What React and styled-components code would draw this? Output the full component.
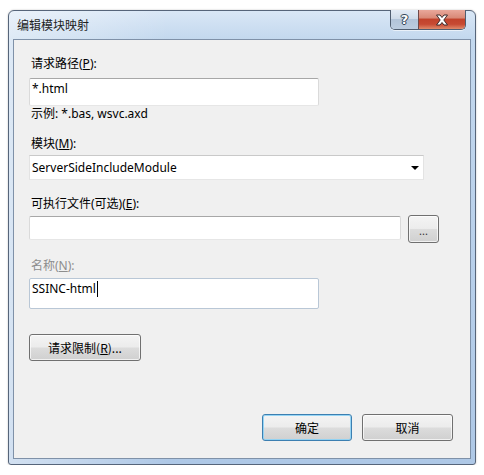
import React from "react";
import styled, { createGlobalStyle } from "styled-components";

const Global = createGlobalStyle`
  html, body { margin: 0; background: #fff; }
  body { font-family: "Noto Sans", "Noto Sans CJK SC", sans-serif; font-size: 12px; color: #000; }
`;

const Page = styled.div`
  padding: 10px 0 0 8px;
`;

const Win = styled.div`
  box-sizing: border-box;
  width: 468px;
  height: 455px;
  border: 1px solid #56657a;
  border-radius: 6px 6px 3px 3px;
  background:
    linear-gradient(to right, rgba(255,255,255,0.45) 0, rgba(255,255,255,0) 160px),
    linear-gradient(to bottom, #d9e7f6 0, #c3d8ee 28px, #b7cfea 60%, #aec8e6 100%);
  padding: 0 4px 5px 4px;
  display: flex;
  flex-direction: column;
  box-shadow: 0 0 2px rgba(0,0,0,0.25);
`;

const TitleBar = styled.div`
  height: 28px;
  display: flex;
  align-items: flex-start;
`;

const Title = styled.div`
  font-family: "Noto Sans CJK SC", sans-serif;
  font-size: 12px;
  line-height: 28px;
  padding-left: 4px;
  color: #1e1e1e;
  flex: 1;
`;

const Caption = styled.div`
  display: flex;
  margin-top: -1px;
  margin-right: 5px;
  border: 1px solid #4f5d70;
  border-top: none;
  border-radius: 0 0 5px 5px;
  overflow: hidden;
  box-shadow: 0 1px 0 rgba(255,255,255,0.6);
`;

const CapBtn = styled.div`
  width: ${(p) => p.w}px;
  height: 19px;
  display: flex;
  align-items: center;
  justify-content: center;
  background: ${(p) =>
    p.close
      ? "linear-gradient(to bottom, #e9a89b 0, #d98a78 40%, #c2432c 50%, #c74a33 75%, #e08a6b 100%)"
      : "linear-gradient(to bottom, #e3ebf5 0, #cfdbe9 45%, #b2c4d9 50%, #bccde0 100%)"};
  border-left: ${(p) => (p.close ? "1px solid #6e4a4a" : "none")};
`;

const HelpGlyph = styled.span`
  font-family: "DejaVu Sans", sans-serif;
  font-weight: bold;
  font-size: 13px;
  line-height: 1;
  color: #fff;
  text-shadow: 0 0 1px #2d3c50, 0 0 1px #2d3c50, 1px 0 0 #3b4b60, -1px 0 0 #3b4b60, 0 1px 0 #3b4b60, 0 -1px 0 #3b4b60;
`;

const Client = styled.div`
  flex: 1;
  border: 1px solid #7f91a8;
  background: #f0f0f0;
  padding: 16px 0 17px 15px;
  display: flex;
  flex-direction: column;
`;

const Label = styled.div`
  font-family: "Noto Sans", "Noto Sans CJK SC", sans-serif;
  line-height: 16px;
  height: 16px;
  padding-left: 2px;
  margin-top: ${(p) => p.mt || 0}px;
  color: ${(p) => (p.disabled ? "#8d8d8d" : "#000")};
  white-space: nowrap;
`;

const TextBox = styled.div`
  box-sizing: border-box;
  width: ${(p) => p.w}px;
  height: ${(p) => p.h}px;
  margin-top: ${(p) => p.mt || 0}px;
  background: #fff;
  border: 1px solid;
  border-color: ${(p) => (p.soft ? "#b9c7d6" : "#a7a7a7 #dadada #e6e6e6 #dadada")};
  border-radius: 2px;
  padding: 2px 0 0 2px;
  line-height: 16px;
  display: flex;
  align-items: flex-start;
  white-space: nowrap;
`;

const Caret = styled.span`
  display: inline-block;
  width: 1px;
  height: 16px;
  background: #000;
  margin-left: 1px;
`;

const Select = styled.div`
  box-sizing: border-box;
  width: 395px;
  height: 25px;
  margin-top: 3px;
  background: #fff;
  border: 1px solid;
  border-color: #c9c9c9 #e3e3e3 #e6e6e6 #e3e3e3;
  display: flex;
  align-items: center;
  padding: 0 0 1px 2px;
  justify-content: space-between;
`;

const Arrow = styled.span`
  width: 0;
  height: 0;
  border-left: 4px solid transparent;
  border-right: 4px solid transparent;
  border-top: 4px solid #000;
  margin-right: 4px;
  margin-top: 1px;
`;

const Row = styled.div`
  display: flex;
  align-items: flex-start;
  gap: 7px;
  margin-top: ${(p) => p.mt || 0}px;
`;

const Button = styled.button`
  box-sizing: border-box;
  width: ${(p) => p.w}px;
  height: ${(p) => p.h || 27}px;
  margin-top: ${(p) => p.mt || 0}px;
  padding: 0;
  font-family: "Noto Sans CJK SC", "Noto Sans", sans-serif;
  font-size: 12px;
  color: #000;
  border: 1px solid ${(p) => (p.focus ? "#3c7fb1" : "#707070")};
  border-radius: 3px;
  background: linear-gradient(to bottom, #f4f4f4 0, #ececec 48%, #dcdcdc 52%, #d0d0d0 100%);
  box-shadow: inset 0 0 0 1px ${(p) => (p.focus ? "rgba(140,210,245,0.9)" : "rgba(255,255,255,0.7)")};
  display: flex;
  align-items: center;
  justify-content: center;
  cursor: default;
`;

const Dots = styled.span`
  font-family: "Noto Sans", sans-serif;
  font-size: 11px;
  letter-spacing: 0;
  margin-top: 3px;
  color: #333;
`;

const Footer = styled.div`
  margin-top: auto;
  display: flex;
  justify-content: flex-end;
  gap: 10px;
  padding-right: 17px;
`;

export default function App() {
  return (
    <>
      <Global />
      <Page>
        <Win>
          <TitleBar>
            <Title>编辑模块映射</Title>
            <Caption>
              <CapBtn w={27}>
                <HelpGlyph>?</HelpGlyph>
              </CapBtn>
              <CapBtn w={46} close>
                <svg width="14" height="12" viewBox="0 0 14 12">
                  <path
                    d="M1.5 1 L5 1 L7 3.5 L9 1 L12.5 1 L8.8 6 L12.5 11 L9 11 L7 8.5 L5 11 L1.5 11 L5.2 6 Z"
                    fill="#fff"
                    stroke="#3d2a2a"
                    strokeWidth="1"
                    strokeLinejoin="round"
                  />
                </svg>
              </CapBtn>
            </Caption>
          </TitleBar>
          <Client>
            <Label>
              请求路径(<u>P</u>):
            </Label>
            <TextBox w={290} h={28} mt={6}>
              *.html
            </TextBox>
            <Label>示例: *.bas, wsvc.axd</Label>
            <Label mt={14}>
              模块(<u>M</u>):
            </Label>
            <Select>
              <span>ServerSideIncludeModule</span>
              <Arrow />
            </Select>
            <Label mt={16}>
              可执行文件(可选)(<u>E</u>):
            </Label>
            <Row mt={3}>
              <TextBox w={372} h={24} mt={1} />
              <Button w={31} h={28}>
                <Dots>...</Dots>
              </Button>
            </Row>
            <Label mt={15} disabled>
              名称(<u>N</u>):
            </Label>
            <TextBox w={290} h={31} mt={4} soft>
              SSINC-html
              <Caret />
            </TextBox>
            <Button w={112} h={27} mt={25}>
              请求限制(<u>R</u>)...
            </Button>
            <Footer>
              <Button w={90} focus>
                确定
              </Button>
              <Button w={91}>取消</Button>
            </Footer>
          </Client>
        </Win>
      </Page>
    </>
  );
}
